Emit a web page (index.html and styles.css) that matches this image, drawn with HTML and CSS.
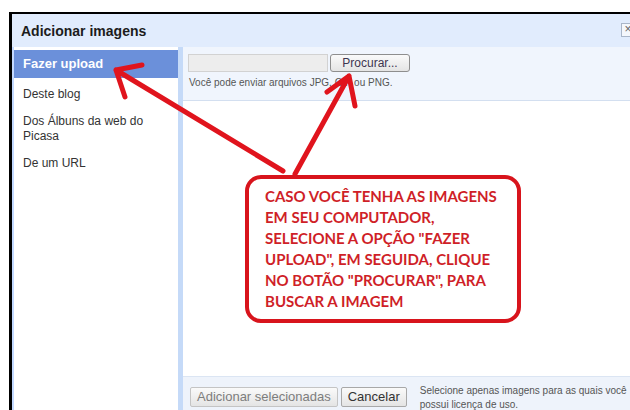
FILE: index.html
```html
<!DOCTYPE html>
<html lang="pt-BR">
<head>
<meta charset="utf-8">
<title>Adicionar imagens</title>
<link rel="stylesheet" href="styles.css">
</head>
<body>
<div class="frame">
  <div class="titlebar">
    <span class="title">Adicionar imagens</span>
    <span class="close">×</span>
  </div>
  <div class="dialog-body">
    <ul class="nav">
      <li class="nav-item is-active">Fazer upload</li>
      <li class="nav-item">Deste blog</li>
      <li class="nav-item">Dos Álbuns da web do Picasa</li>
      <li class="nav-item">De um URL</li>
    </ul>
    <div class="divider"></div>
    <div class="main">
      <div class="upload">
        <div class="file-row">
          <span class="file-field"></span>
          <span class="btn btn-browse">Procurar...</span>
        </div>
        <p class="hint">Você pode enviar arquivos JPG, GIF ou PNG.</p>
      </div>
      <div class="content"></div>
      <div class="footer">
        <span class="btn btn-disabled">Adicionar selecionadas</span>
        <span class="btn">Cancelar</span>
        <p class="note">Selecione apenas imagens para as quais você<br>possui licença de uso.</p>
      </div>
    </div>
  </div>
</div>

<svg class="arrows" width="630" height="410" viewBox="0 0 630 410">
  <g stroke="#e0141d" stroke-width="5" stroke-linecap="round" fill="none">
    <path d="M283 171 L116 70 M116 70 L142 65 M116 70 L125 97"/>
    <path d="M295 174 L349 76 M349 76 L327 92 M349 76 L355 106"/>
  </g>
</svg>

<div class="callout">
  CASO VOCÊ TENHA AS IMAGENS<br>
  EM SEU COMPUTADOR,<br>
  SELECIONE A OPÇÃO "FAZER<br>
  UPLOAD", EM SEGUIDA, CLIQUE<br>
  NO BOTÃO "PROCURAR", PARA<br>
  BUSCAR A IMAGEM
</div>
</body>
</html>
```

FILE: styles.css
```css
html, body {
  margin: 0;
  height: 410px;
  overflow: hidden;
  background: #fff;
}

body {
  position: relative;
  font-family: "Liberation Sans", Arial, sans-serif;
  color: #333;
}

/* dialog window */
.frame {
  margin: 12px 0 0 9px;
  width: 641px;
  height: 396px;
  border-top: 2px solid #000;
  border-left: 3px solid #000;
  display: flex;
  flex-direction: column;
}

.titlebar {
  height: 33px;
  flex: none;
  background: #e1ecfd;
  display: flex;
  align-items: center;
  justify-content: space-between;
  padding: 0 18px 0 9px;
}

.title {
  font-size: 14px;
  font-weight: bold;
  color: #1c1c1c;
}

.close {
  width: 12px;
  height: 12px;
  border: 1px solid #a9b6c9;
  background: #f4f7fc;
  color: #666;
  font-size: 12px;
  line-height: 11px;
  text-align: center;
  margin-top: -2px;
}

.dialog-body {
  flex: 1;
  display: flex;
  min-height: 0;
}

/* left navigation */
.nav {
  list-style: none;
  margin: 0;
  padding: 3px 0 0;
  width: 164px;
  flex: none;
  border-left: 2px solid #c3d9ff;
  font-size: 12px;
}

.nav-item {
  padding: 6px 9px;
  line-height: 15px;
  color: #333;
}

.nav-item.is-active {
  background: #6b90da;
  color: #fff;
  font-weight: bold;
  font-size: 13px;
  line-height: 16px;
  margin-bottom: 3px;
}

.divider {
  width: 5px;
  flex: none;
  background: #c5daf8;
}

.main {
  flex: 1;
  display: flex;
  flex-direction: column;
}

/* upload panel */
.upload {
  background: #f0f5fd;
  border-bottom: 1px solid #d3dff0;
  padding: 7px 5px 11px;
}

.file-row {
  display: flex;
  align-items: center;
  gap: 2px;
}

.file-field {
  width: 138px;
  height: 16px;
  border: 1px solid #d2d2d2;
  background: #ededed;
}

.btn {
  display: inline-block;
  font-size: 13px;
  line-height: 16px;
  padding: 1px 6px;
  border: 1px solid #a8a8a8;
  border-radius: 2px;
  background: linear-gradient(#fafafa, #e4e4e4);
  color: #333;
}

.btn-browse {
  width: 66px;
  text-align: center;
  font-size: 12px;
  padding: 0 6px;
  border-radius: 3px;
  border-color: #8e8e8e;
  color: #3d3550;
}

.hint {
  margin: 5px 0 0 1px;
  font-size: 10px;
  line-height: 12px;
  color: #555;
}

.content {
  flex: 1;
  background: #fff;
}

/* footer bar */
.footer {
  height: 23px;
  flex: none;
  background: #eef3fb;
  border-top: 1px solid #dbe5f3;
  display: flex;
  align-items: flex-start;
  padding: 10px 7px 0;
  gap: 3px;
}

.footer .btn {
  padding: 1px 6px;
}

.btn-disabled {
  color: #7d7d7d;
  border-color: #c4c4c4;
}

.note {
  margin: -3px 0 0 10px;
  font-size: 10px;
  line-height: 14px;
  color: #555;
}

/* annotation overlay */
.arrows {
  position: absolute;
  left: 0;
  top: 0;
  z-index: 1;
}

.callout {
  position: absolute;
  left: 245px;
  top: 175px;
  width: 239px;
  height: 133px;
  z-index: 2;
  background: #fff;
  border: 4px solid #d8141c;
  border-radius: 16px;
  padding: 7px 13px 0 16px;
  font-family: Lato, "Open Sans", sans-serif;
  font-weight: bold;
  font-size: 15px;
  line-height: 21px;
  color: #cf1f28;
  white-space: nowrap;
}
```
